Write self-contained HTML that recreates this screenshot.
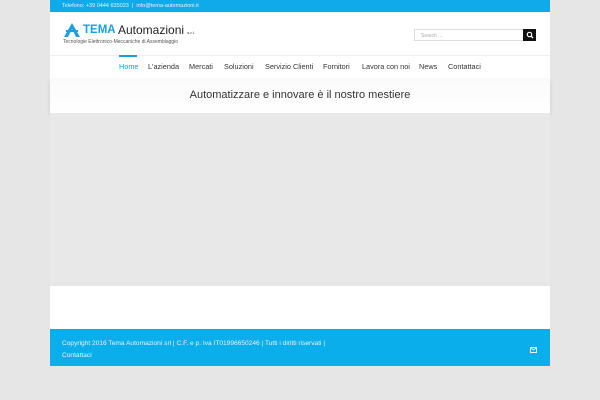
<!DOCTYPE html>
<html><head><meta charset="utf-8"><style>
*{margin:0;padding:0;box-sizing:border-box}
body{width:600px;height:400px;background:#e6e6e6;font-family:"Liberation Sans",sans-serif;position:relative;overflow:hidden}
.wrap{position:absolute;left:50px;width:500px;top:0}
.top{height:12px;background:#0eaaea;color:#e8f6fd;font-size:5.5px;line-height:12px;padding-left:12px}
.hdr{height:44px;background:#fff;position:relative;border-bottom:1px solid #eee}
.nav{height:22px;background:#fff;position:relative;font-size:7.3px;color:#333}
.nav span{position:absolute;top:6px}
.title{height:35px;background:linear-gradient(#fafafa,#fff);text-align:center;font-size:11px;color:#333;line-height:35px;box-shadow:0 3px 4px rgba(0,0,0,.12)}
.mid{height:170px;background:#e8e8e8;margin-top:0}
.white{height:43px;background:#fff;margin-top:3px}
.foot{height:37px;background:#0aaeea;color:#e6f6fd;font-size:6.6px;padding:9px 0 0 12px;line-height:12px;position:relative}
</style></head><body>
<div class="wrap">
<div class="top">Telefono: +39 0444 635023 &nbsp;|&nbsp; info@tema-automazioni.it</div>
<div class="hdr">
<svg style="position:absolute;left:14px;top:11px" width="16" height="14" viewBox="0 0 16 14"><path d="M8 0 L16 14 H12 L8 6 L4 14 H0 Z" fill="#1aa0e0"/><rect x="2" y="7" width="12" height="2" fill="#1aa0e0"/></svg>
<div style="position:absolute;left:33px;top:12px;font-size:11.5px;font-weight:bold;color:#1aa0e0">TEMA</div>
<div style="position:absolute;left:68px;top:11px;font-size:12px;color:#222">Automazioni <span style="font-size:4px">s.r.l.</span></div>
<div style="position:absolute;left:13px;top:27px;font-size:5px;color:#555">Tecnologie Elettronico-Meccaniche di Assemblaggio</div>
<div style="position:absolute;left:364px;top:17px;width:110px;height:12px;border:1px solid #ddd;font-size:5px;color:#aaa;padding:3px 6px">Search ...</div>
<div style="position:absolute;left:473px;top:17px;width:13px;height:12px;background:#111"></div>
<svg style="position:absolute;left:476px;top:19px" width="8" height="8"><circle cx="3.5" cy="3.5" r="2.2" stroke="#fff" stroke-width="1.2" fill="none"/><path d="M5 5 L7 7" stroke="#fff" stroke-width="1.3"/></svg>
</div>
<div class="nav">
<div style="position:absolute;left:69px;top:-1px;width:18px;height:2px;background:#1aa0e0"></div>
<span style="left:69px;color:#1aa0e0">Home</span><span style="left:98px">L'azienda</span><span style="left:139px">Mercati</span><span style="left:174px">Soluzioni</span><span style="left:215px">Servizio Clienti</span><span style="left:273px">Fornitori</span><span style="left:312px">Lavora con noi</span><span style="left:369px">News</span><span style="left:398px">Contattaci</span>
</div>
<div class="title">Automatizzare e innovare è il nostro mestiere</div>
<div class="mid"></div>
<div class="white"></div>
<div class="foot">Copyright 2016 Tema Automazioni srl | C.F. e p. Iva IT01996650246 | Tutti i diritti riservati |<br>Contattaci
<svg style="position:absolute;left:480px;top:18px" width="7" height="6"><rect x=".5" y=".5" width="6" height="5" fill="none" stroke="#e6f6fd"/><path d="M.5 .5 L3.5 3 L6.5 .5" fill="none" stroke="#e6f6fd"/></svg></div>
</div>
</body></html>
